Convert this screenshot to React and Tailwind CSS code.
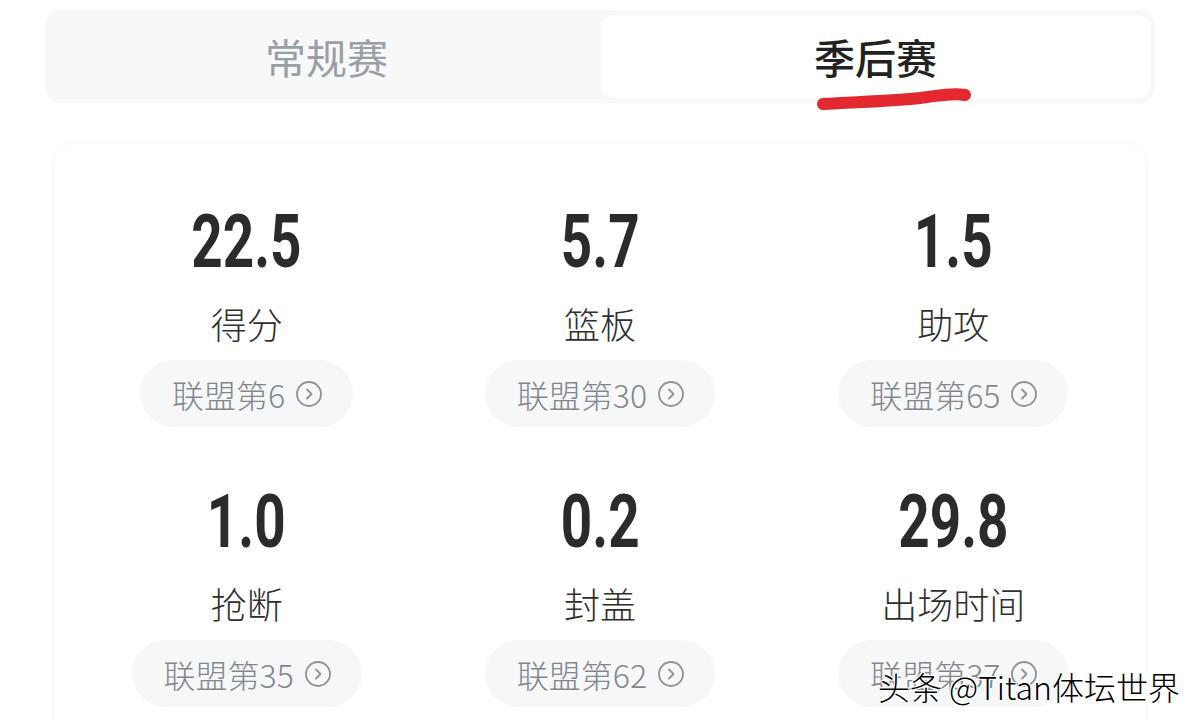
const stats = [
  { value: "22.5", label: "得分", rank: "联盟第6" },
  { value: "5.7", label: "篮板", rank: "联盟第30" },
  { value: "1.5", label: "助攻", rank: "联盟第65" },
  { value: "1.0", label: "抢断", rank: "联盟第35" },
  { value: "0.2", label: "封盖", rank: "联盟第62" },
  { value: "29.8", label: "出场时间", rank: "联盟第37" },
];

const cjk = { fontFamily: '"Noto Sans CJK SC", "Noto Sans", sans-serif' };

function ArrowCircle() {
  return (
    <svg width="28" height="28" viewBox="0 0 28 28" fill="none" stroke="#8e9197" strokeWidth="1.8" strokeLinecap="round" strokeLinejoin="round">
      <circle cx="14" cy="14" r="12" />
      <path d="M12 9.5l4.5 4.5-4.5 4.5" />
    </svg>
  );
}

function StatCell({ value, label, rank }) {
  return (
    <div className="flex flex-col items-center">
      <div
        className="h-[74px] text-[74px] leading-none font-bold text-[#2b2b2b] scale-x-[0.74]"
        style={{ fontFamily: "Roboto, 'DejaVu Sans', sans-serif" }}
      >
        {value}
      </div>
      <div className="mt-[20px] text-[36px] leading-[48px] font-light text-[#2f2f2f]" style={cjk}>
        {label}
      </div>
      <div className="mt-[13px] flex h-[67px] items-center gap-[10px] rounded-full bg-[#f6f7f9] pl-[32px] pr-[30px]">
        <span className="text-[32px] leading-none font-light text-[#83878d]" style={cjk}>
          {rank}
        </span>
        <ArrowCircle />
      </div>
    </div>
  );
}

export default function App() {
  return (
    <div className="relative h-[720px] w-[1200px] overflow-hidden bg-white" style={cjk}>
      <div className="px-[45px] pt-[10px]">
        <div className="relative flex h-[93px] rounded-[14px] bg-[#f7f8fa] p-[5px]">
          <div className="flex flex-1 items-center justify-center pl-[2px] text-[41px] text-[#9a9ea5]">
            常规赛
          </div>
          <div className="flex flex-1 items-center justify-center rounded-[12px] bg-white text-[41px] font-medium text-[#222]">
            季后赛
          </div>
          <svg className="absolute left-[770px] top-[72px]" width="160" height="36" viewBox="0 0 160 36">
            <path d="M8 22 C40 20, 80 19, 105 16 C125 13, 140 11, 150 13" stroke="#e3282f" strokeWidth="12" strokeLinecap="round" fill="none" />
          </svg>
        </div>
      </div>

      <div className="mx-[55px] mt-[42px] h-[600px] rounded-[16px] bg-white px-[15px] pt-[60px] shadow-[0_0_10px_rgba(0,0,0,0.04)]">
        <div className="grid grid-cols-3 gap-y-[58px]">
          {stats.map((s) => (
            <StatCell key={s.label} {...s} />
          ))}
        </div>
      </div>

      <div
        className="absolute bottom-[18px] right-[20px] text-[32px] leading-none text-black"
        style={{
          fontFamily: '"Noto Sans CJK SC", sans-serif',
          fontWeight: 300,
          textShadow: "1px 1px 0 #fff, -1px -1px 0 #fff, 1px -1px 0 #fff, -1px 1px 0 #fff, 0 0 2px #fff",
        }}
      >
        头条 @Titan体坛世界
      </div>
    </div>
  );
}
